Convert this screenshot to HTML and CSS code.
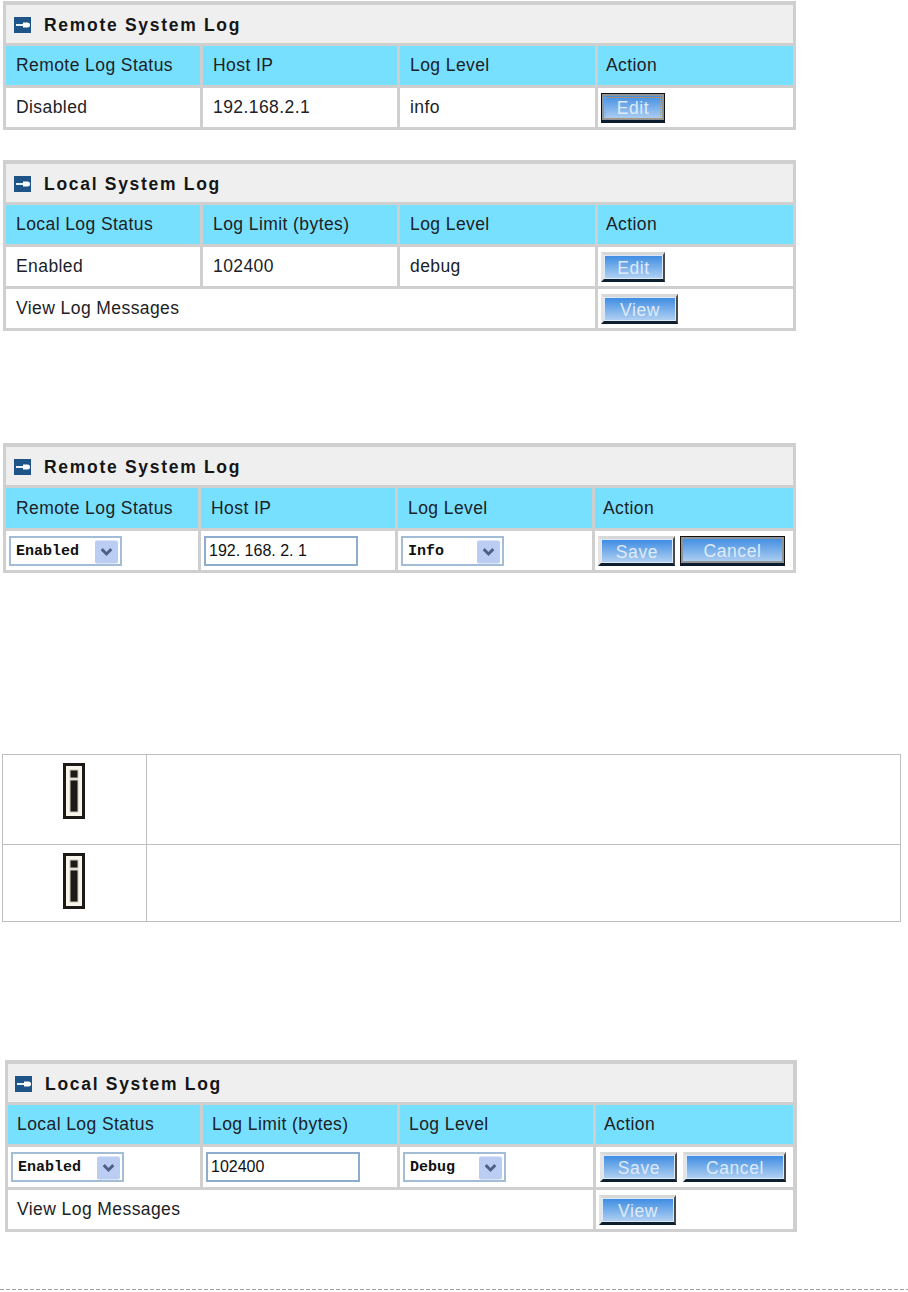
FILE: index.html
```html
<!DOCTYPE html>
<html lang="en">
<head>
<meta charset="utf-8">
<title>System Log</title>
<link rel="stylesheet" href="styles.css">
</head>
<body>
<svg width="0" height="0" class="defs">
  <symbol id="key" viewBox="0 0 17 16">
    <rect width="17" height="16" fill="#1f5488"/>
    <path d="M2 7h7v2H2z" fill="#e8f0f8"/>
    <path d="M9 5.5h4.5a2.5 2.5 0 0 1 0 5H9z" fill="#fff"/>
  </symbol>
  <symbol id="chev" viewBox="0 0 24 24">
    <rect width="24" height="24" rx="2" fill="#bccdf3"/>
    <path d="M7 9l5 5 5-5" fill="none" stroke="#4d6185" stroke-width="3"/>
  </symbol>
  <symbol id="info" viewBox="0 0 22 56">
    <rect x="0" y="0" width="22" height="56" fill="#1c1917"/>
    <rect x="3" y="3" width="16" height="50" fill="#f8f6ec"/>
    <rect x="7" y="7" width="8" height="8" fill="#1c1917" stroke="#c9c7bb"/>
    <rect x="7" y="17" width="8" height="32" fill="#1c1917" stroke="#c9c7bb"/>
  </symbol>
</svg>

<section class="log t1">
  <h2 class="title"><svg class="key"><use href="#key"/></svg>Remote System Log</h2>
  <div class="th">Remote Log Status</div><div class="th">Host IP</div><div class="th">Log Level</div><div class="th last">Action</div>
  <div class="td">Disabled</div><div class="td">192.168.2.1</div><div class="td">info</div>
  <div class="td act"><button class="btn focus dot w64">Edit</button></div>
</section>

<section class="log t2">
  <h2 class="title"><svg class="key"><use href="#key"/></svg>Local System Log</h2>
  <div class="th">Local Log Status</div><div class="th">Log Limit (bytes)</div><div class="th">Log Level</div><div class="th last">Action</div>
  <div class="td">Enabled</div><div class="td">102400</div><div class="td">debug</div>
  <div class="td act"><button class="btn w64">Edit</button></div>
  <div class="td span3">View Log Messages</div>
  <div class="td act"><button class="btn w76">View</button></div>
</section>

<section class="log t3">
  <h2 class="title"><svg class="key"><use href="#key"/></svg>Remote System Log</h2>
  <div class="th">Remote Log Status</div><div class="th">Host IP</div><div class="th">Log Level</div><div class="th last">Action</div>
  <div class="td form"><span class="sel s-status">Enabled<svg class="chev"><use href="#chev"/></svg></span></div>
  <div class="td form"><input class="ip" value="192. 168. 2. 1"></div>
  <div class="td form"><span class="sel s-level">Info<svg class="chev"><use href="#chev"/></svg></span></div>
  <div class="td act gap"><button class="btn w76">Save</button><button class="btn focus w105">Cancel</button></div>
</section>

<table class="notes">
  <tr class="n1"><td class="ic"><svg class="info"><use href="#info"/></svg></td><td></td></tr>
  <tr class="n2"><td class="ic"><svg class="info"><use href="#info"/></svg></td><td></td></tr>
</table>

<section class="log t4">
  <h2 class="title"><svg class="key"><use href="#key"/></svg>Local System Log</h2>
  <div class="th">Local Log Status</div><div class="th">Log Limit (bytes)</div><div class="th">Log Level</div><div class="th last">Action</div>
  <div class="td form"><span class="sel s-status">Enabled<svg class="chev"><use href="#chev"/></svg></span></div>
  <div class="td form"><input class="ip" value="102400"></div>
  <div class="td form"><span class="sel s-level">Debug<svg class="chev"><use href="#chev"/></svg></span></div>
  <div class="td act gap"><button class="btn w76">Save</button><button class="btn w105">Cancel</button></div>
  <div class="td span3">View Log Messages</div>
  <div class="td act"><button class="btn w76">View</button></div>
</section>

<div class="rule"></div>
</body>
</html>
```
FILE: styles.css
```css
html, body { margin: 0; padding: 0; background: #fff; }
body { height: 1292px; overflow: hidden; font-family: "Liberation Sans", Arial, sans-serif; color: #1c2226; }
.defs { position: absolute; }

.log {
  display: grid;
  gap: 3px;
  padding: 4px 3px 3px;
  background: #cfcfcf;
  box-sizing: border-box;
  font-size: 17.5px;
  letter-spacing: 0.42px;
}
.title {
  grid-column: 1 / -1;
  margin: 0;
  height: 38px;
  box-sizing: border-box;
  display: flex;
  align-items: center;
  padding: 2px 0 0 8px;
  background: #efefef;
  color: #161616;
  font-size: 17.5px;
  font-weight: bold;
  letter-spacing: 1.7px;
}
.key { width: 17px; height: 16px; margin-right: 13px; flex: none; }
.th, .td { display: flex; align-items: center; padding-left: 10px; min-width: 0; }
.th { background: #78e0ff; }
.th.last { padding-left: 8px; }
.td { background: #fff; }
.span3 { grid-column: span 3; }
.act { padding-left: 3px; }
.gap { gap: 5px; }
.form { padding-left: 3px; }

.t1 { margin: 1px 0 0 3px; width: 793px; height: 129px; grid-template-columns: 194px 194px 195px 195px; grid-template-rows: 38px 39px 39px; }
.t2 { margin: 30px 0 0 3px; width: 793px; height: 171px; grid-template-columns: 194px 194px 195px 195px; grid-template-rows: 38px 39px 39px 39px; }
.t3 { margin: 112px 0 0 3px; width: 793px; height: 130px; grid-template-columns: 192px 194px 194px 198px; grid-template-rows: 38px 40px 39px; }
.t4 { margin: 138px 0 0 5px; width: 792px; height: 172px; grid-template-columns: 192px 194px 193px 197px; grid-template-rows: 38px 39px 40px 39px; }
.t4 .title { padding-left: 7px; }
.t4 .th, .t4 .span3 { padding-left: 9px; }
.t4 .th.last { padding-left: 8px; }
.t4 .gap { padding-left: 4px; gap: 6px; }
.t4 .w105 { width: 103px; }

.btn {
  height: 30px;
  padding: 3px 0 0;
  box-sizing: border-box;
  border-style: solid;
  border-width: 3px 2px 3px 3px;
  border-color: #d8d8d8 #4a4a4a #0d2030 #e4e4e4;
  background: linear-gradient(#3a8ae2, #b4d2f2);
  box-shadow: inset 0 0 0 1px #dbe9f8;
  color: #dfeafa;
  font: 17.5px "Liberation Sans", Arial, sans-serif;
  letter-spacing: 0.6px;
}
.btn.focus {
  border-width: 1px 1px 3px;
  border-color: #111 #111 #0a1c2e;
  box-shadow: inset 0 0 0 2px #8f9499;
}
.btn.dot { outline: 1px dotted #b09a80; outline-offset: -5px; }
.w64 { width: 64px; }
.w76 { width: 77px; }
.w105 { width: 105px; }

.sel {
  position: relative;
  display: flex;
  align-items: center;
  height: 30px;
  box-sizing: border-box;
  padding: 1px 0 0 5px;
  border: 2px solid #a3bdd6;
  background: #fff;
  font: bold 15px "Liberation Mono", monospace;
  letter-spacing: 0;
  color: #111;
}
.s-status { width: 113px; }
.s-level { width: 103px; }
.chev { position: absolute; right: 2px; top: 2px; width: 23px; height: 24px; }

.ip {
  width: 154px;
  height: 30px;
  padding: 0 3px;
  box-sizing: border-box;
  border: 2px solid #8eaccb;
  background: #fff;
  font: 16px "Liberation Sans", Arial, sans-serif;
  color: #111;
  outline: none;
}

.notes {
  margin: 181px 0 0 2px;
  width: 899px;
  border-collapse: collapse;
  table-layout: fixed;
}
.notes td { border: 1px solid #bfbfbf; padding: 0; }
.notes td:first-child { width: 143px; }
.n1 { height: 90px; }
.n2 { height: 77px; }
.ic { vertical-align: top; }
.info { display: block; width: 22px; height: 56px; margin: 8px 0 0 60px; }

.rule {
  margin: 57px 0 0;
  height: 1px;
  background: repeating-linear-gradient(90deg, #a0a0a0 0 4px, transparent 4px 6px);
}
```
